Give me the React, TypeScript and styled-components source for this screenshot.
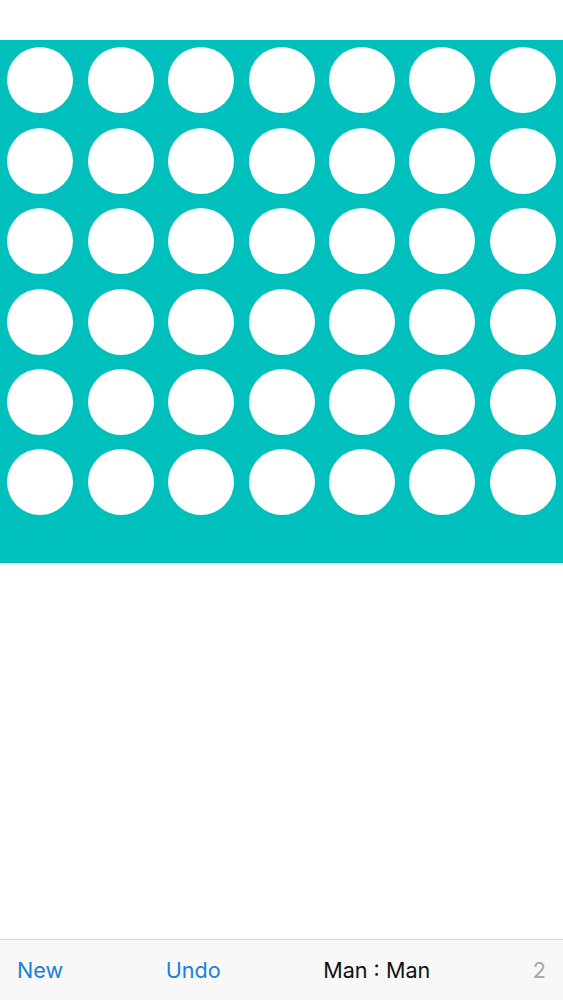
import React from 'react';
import styled, {createGlobalStyle} from "styled-components";

const COLUMNS = 7
const ROWS = 6

const GlobalStyle = createGlobalStyle`
    html, body {
        margin: 0;
        padding: 0;
        background: #ffffff;
        font-family: Inter, "Liberation Sans", sans-serif;
    }
`

type ButtonProps = { $muted?: boolean, $dark?: boolean }

export default function App() {
    const cells = Array.from({length: COLUMNS * ROWS}, (_, i) => i)

    return (
        <>
            <GlobalStyle/>
            <StyledPage>
                <StyledBoard>
                    <StyledGrid>
                        {cells.map(i => (
                            <StyledCell key={i}>
                                <StyledHole/>
                            </StyledCell>
                        ))}
                    </StyledGrid>
                </StyledBoard>

                <StyledSpacer/>

                <StyledToolbar>
                    <StyledToolButton>New</StyledToolButton>
                    <StyledToolButton>Undo</StyledToolButton>
                    <StyledToolButton $dark>Man : Man</StyledToolButton>
                    <StyledToolButton $muted>2</StyledToolButton>
                </StyledToolbar>
            </StyledPage>
        </>
    );
}

const StyledPage = styled.div`
    display: flex;
    flex-direction: column;
    min-height: 100vh;
`

const StyledBoard = styled.section`
    margin-top: 40px;
    background-color: #00c0bd;
    padding-bottom: 40px;
`

const StyledGrid = styled.div`
    display: grid;
    grid-template-columns: repeat(${COLUMNS}, 1fr);
`

const StyledCell = styled.div`
    aspect-ratio: 1;
    display: flex;
    align-items: center;
    justify-content: center;
`

const StyledHole = styled.div`
    width: 66px;
    height: 66px;
    border-radius: 50%;
    background-color: #ffffff;
`

const StyledSpacer = styled.div`
    flex: 1;
`

const StyledToolbar = styled.footer`
    height: 60px;
    border-top: 1px solid #d6d6d6;
    background-color: #f8f8f8;
    display: flex;
    align-items: center;
    justify-content: space-between;
    padding: 0 17px;
`

const StyledToolButton = styled.span<ButtonProps>`
    font-size: 21.6px;
    color: ${p => p.$muted ? "#a6a6a6" : p.$dark ? "#111111" : "#1a7fdc"};
`
